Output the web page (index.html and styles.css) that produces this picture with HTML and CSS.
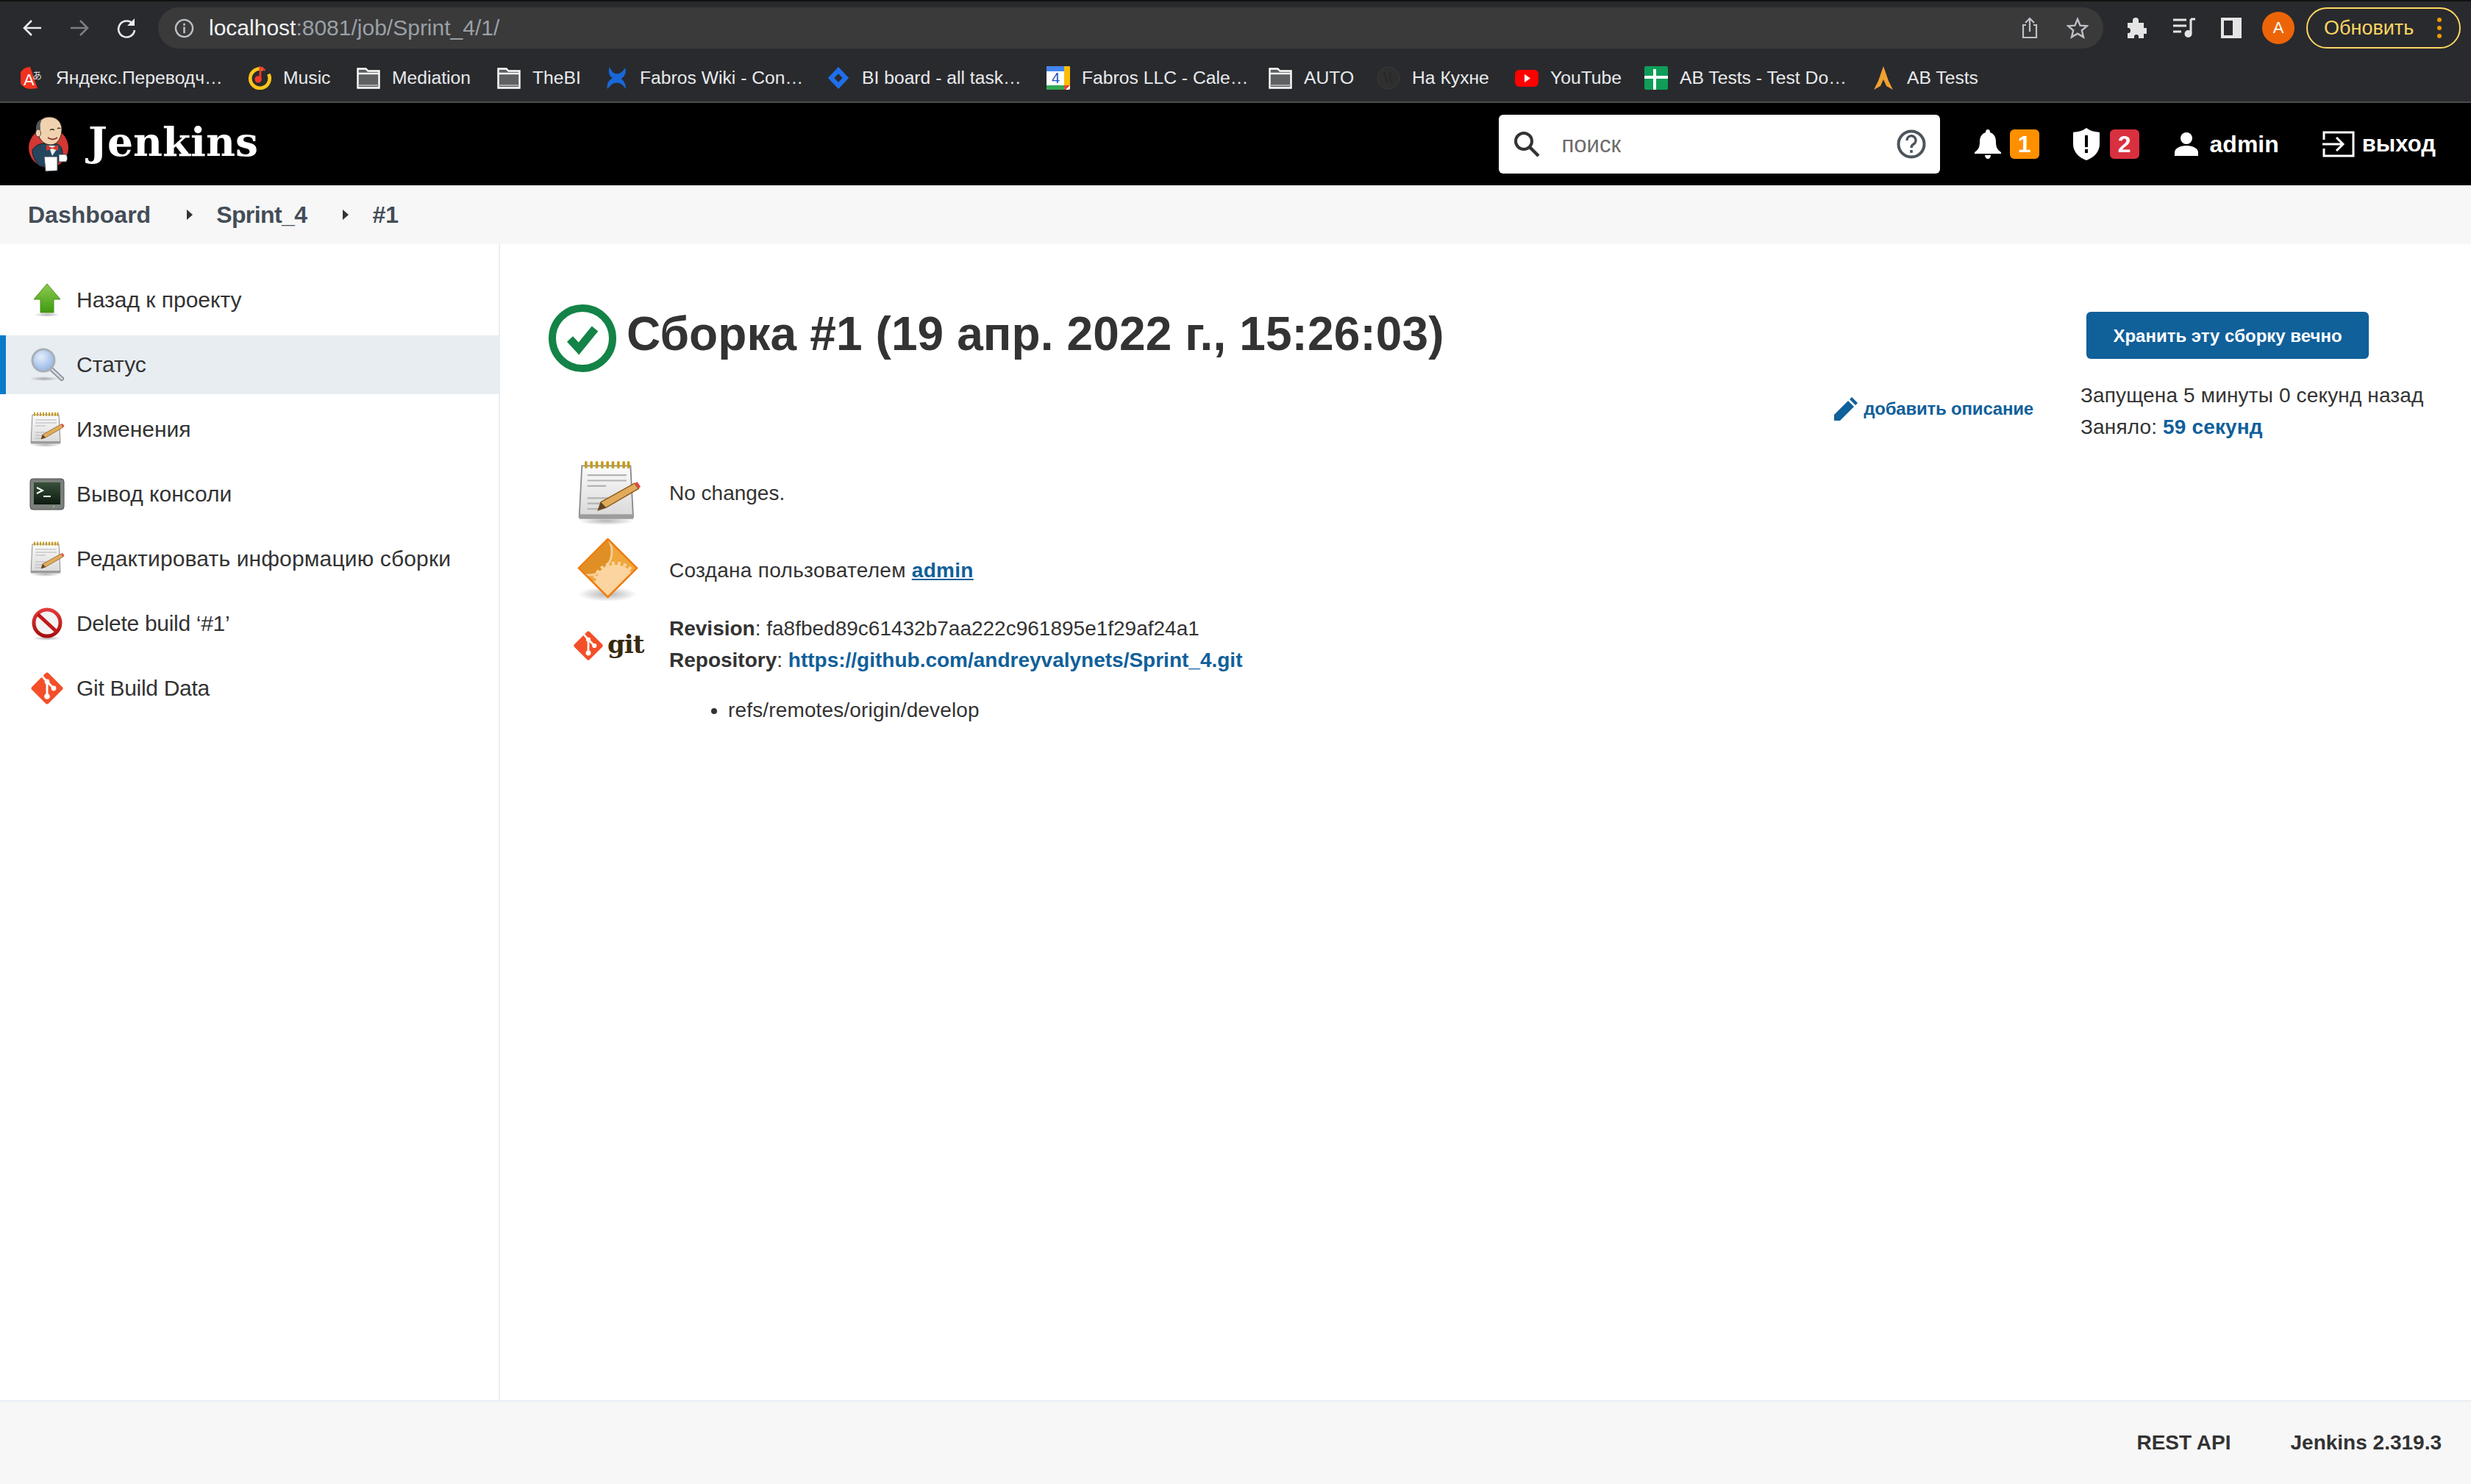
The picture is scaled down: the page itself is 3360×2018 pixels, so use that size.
FILE: index.html
```html
<!DOCTYPE html>
<html lang="ru">
<head>
    <meta charset="UTF-8">
    <title>Sprint_4 #1 [Jenkins]</title>
    <link rel="stylesheet" href="styles.css">
</head>
<body>
    <svg class="defs" width="0" height="0">
        <defs>
            <linearGradient id="paper" x1="0" y1="0" x2="0" y2="1"><stop offset="0" stop-color="#fbfbfb"/><stop offset="1" stop-color="#d8d8d8"/></linearGradient>
            <linearGradient id="green" x1="0" y1="0" x2="0" y2="1"><stop offset="0" stop-color="#8ecb50"/><stop offset="1" stop-color="#3f9a10"/></linearGradient>
            <radialGradient id="lens" cx="0.4" cy="0.35" r="0.7"><stop offset="0" stop-color="#e4eefb"/><stop offset="1" stop-color="#8fb2e4"/></radialGradient>
            <linearGradient id="screen" x1="0" y1="0" x2="0" y2="1"><stop offset="0" stop-color="#38503a"/><stop offset="1" stop-color="#0e1a10"/></linearGradient>
            <linearGradient id="ring" x1="0" y1="0" x2="0" y2="1"><stop offset="0" stop-color="#e23b3b"/><stop offset="1" stop-color="#a80f0f"/></linearGradient>
            <radialGradient id="shade"><stop offset="0" stop-color="#000" stop-opacity=".3"/><stop offset="1" stop-color="#000" stop-opacity="0"/></radialGradient>
            <clipPath id="gem"><path d="M42.500 0L83 40.500 42.500 81 2 40.500z"/></clipPath>
            <symbol id="folder" viewBox="0 0 32 32">
                <path d="M1.500 3.500h11l3 3h15v23h-29z" fill="#5f6063" stroke="#fff" stroke-width="2.400"/>
                <path d="M2 10h28" stroke="#fff" stroke-width="2.400"/>
                <path d="M2 26h28" stroke="#aaa" stroke-width="2"/>
            </symbol>
            <symbol id="notepad" viewBox="0 0 48 48">
                <ellipse cx="22" cy="45" rx="21" ry="3" fill="url(#shade)"/>
                <path d="M4 4h36l2 38H2z" fill="url(#paper)" stroke="#8a8a8a"/>
                <rect x="2" y="40" width="40" height="3.500" fill="#9c9c9c"/>
                <g stroke="#b3b3b3" stroke-width="1.200">
                    <path d="M8 11h29M8 15h29M8 19h14M8 28h17M8 32h12M8 36h10"/>
                </g>
                <g stroke="#c79c1a" stroke-width="2" stroke-linecap="round">
                    <path d="M7 1.500v3.500M11 1.500v3.500M15 1.500v3.500M19 1.500v3.500M23 1.500v3.500M27 1.500v3.500M31 1.500v3.500M35 1.500v3.500M38.500 1.500v3.500"/>
                </g>
                <path d="M16 37l2-6 25-14 3 4-24 14z" fill="#e0ac5c" stroke="#8f5f20" stroke-width=".8"/>
                <path d="M16 37l2-6 4 4z" fill="#5d4428"/>
                <path d="M43 17l2-1 2.500 3.500-1.500 1.500z" fill="#e0474c"/>
            </symbol>
            <symbol id="gitlogo" viewBox="0 0 48 48">
                <rect x="8" y="8" width="32" height="32" rx="3" transform="rotate(45 24 24)" fill="#f34f29"/>
                <g stroke="#fff" stroke-width="3" fill="none">
                    <path d="M17 7l7 8v20M24 15l9 9"/>
                </g>
                <circle cx="24" cy="15" r="3.400" fill="#fff"/>
                <circle cx="24" cy="35" r="3.800" fill="#fff"/>
                <circle cx="33" cy="24" r="3.400" fill="#fff"/>
            </symbol>
        </defs>
    </svg>

    <div class="page">
        <div class="browser">
            <div class="toolbar">
                <svg class="tb-icon" viewBox="0 0 28 28"><path d="M26 14H4M13 4L3 14l10 10" fill="none" stroke="#e8eaed" stroke-width="2.600"/></svg>
                <svg class="tb-icon fwd" viewBox="0 0 28 28"><path d="M2 14h22M15 4l10 10-10 10" fill="none" stroke="#7c7e81" stroke-width="2.600"/></svg>
                <svg class="tb-icon reload" viewBox="0 0 28 28"><path d="M23 9a11 11 0 1 0 2 8" fill="none" stroke="#e8eaed" stroke-width="2.600"/><path d="M25 1v10H15z" fill="#e8eaed"/></svg>
                <div class="urlbar">
                    <svg class="info" viewBox="0 0 28 28"><circle cx="14" cy="14" r="12" fill="none" stroke="#bdc1c6" stroke-width="2.400"/><path d="M14 12v9M14 7v3" stroke="#bdc1c6" stroke-width="2.600"/></svg>
                    <span class="url"><span class="host">localhost</span>:8081/job/Sprint_4/1/</span>
                    <svg class="share" viewBox="0 0 22 30"><path d="M6 11H2v17h18V11h-4M11 20V2M5 8l6-6 6 6" fill="none" stroke="#bdc1c6" stroke-width="2.200"/></svg>
                    <svg class="star" viewBox="0 0 30 30"><path d="M15 3l3.600 8.600 9.300.7-7.100 6 2.200 9.100L15 22.600 7 27.400l2.200-9.100-7.100-6 9.300-.7z" fill="none" stroke="#bdc1c6" stroke-width="2.400"/></svg>
                </div>
                <svg class="puzzle" viewBox="0 0 28 30"><path d="M2 8h7V5a4 4 0 0 1 8 0v3h7v7h2a4 4 0 0 1 0 8h-2v6h-7v-2a3 3 0 0 0-6 0v2H2v-7h2a4 4 0 0 0 0-7H2z" fill="#e4e4e4"/></svg>
                <svg class="queue" viewBox="0 0 32 28"><path d="M1 3h18M1 11h18M1 19h11" stroke="#e4e4e4" stroke-width="3"/><path d="M25 2v20" stroke="#e4e4e4" stroke-width="3"/><path d="M25 2h6" stroke="#e4e4e4" stroke-width="3"/><circle cx="21.500" cy="22" r="5" fill="#e4e4e4"/></svg>
                <svg class="panel" viewBox="0 0 28 28"><rect x="2" y="2" width="24" height="24" fill="none" stroke="#e4e4e4" stroke-width="4"/><rect x="16" y="2" width="10" height="24" fill="#e4e4e4"/></svg>
                <div class="avatar">A</div>
                <div class="update">
                    <span>Обновить</span>
                    <span class="dots"><i></i><i></i><i></i></span>
                </div>
            </div>
            <div class="bookmarks">
                <a class="bm">
                    <svg viewBox="0 0 30 32"><path d="M12 1a15 15 0 0 0 0 30l10-1z" fill="#f0321e"/><text x="3" y="26" class="bm-glyph">A</text><text x="15" y="17" class="bm-glyph-sm">あ</text></svg>
                    <span class="w-228">Яндекс.Переводч…</span>
                </a>
                <a class="bm">
                    <svg viewBox="0 0 34 32"><path d="M22 3.500a14 14 0 1 0 8 7" fill="none" stroke="#fcc419" stroke-width="5"/><circle cx="15" cy="18" r="5" fill="#ef3a2c"/><path d="M18 18V1l7 4" fill="none" stroke="#ef3a2c" stroke-width="3"/></svg>
                    <span class="w-67">Music</span>
                </a>
                <a class="bm"><svg class="fold"><use href="#folder"/></svg><span class="w-110">Mediation</span></a>
                <a class="bm"><svg class="fold"><use href="#folder"/></svg><span class="w-65">TheBI</span></a>
                <a class="bm">
                    <svg viewBox="0 0 34 32"><path d="M7 0c3 6 6 10 11 10 5 0 9-4 12-9 2 8-1 13-6 16 4 3 7 8 7 15-5-6-8-9-13-9-6 0-8 3-14 9-1-8 2-13 8-16C7 14 5 8 7 0z" fill="#1868db"/></svg>
                    <span class="w-221">Fabros Wiki - Con…</span>
                </a>
                <a class="bm">
                    <svg viewBox="0 0 34 32"><path d="M17 0l15 16-15 16L2 16z" fill="#1f6feb"/><path d="M17 10l6 6-6 6-6-6z" fill="#292a2d"/></svg>
                    <span class="w-218">BI board - all task…</span>
                </a>
                <a class="bm">
                    <svg viewBox="0 0 32 32"><rect x="0" y="0" width="32" height="32" rx="2" fill="#fff"/><path d="M0 2a2 2 0 0 1 2-2h22v7H0z" fill="#4285f4"/><path d="M24 0h6a2 2 0 0 1 2 2v24h-8z" fill="#fbbc04"/><path d="M0 26h24v6H2a2 2 0 0 1-2-2z" fill="#34a853"/><path d="M24 26h8l-6 6h-2z" fill="#ea4335"/><text x="7" y="23" class="cal-num">4</text></svg>
                    <span class="w-221">Fabros LLC - Cale…</span>
                </a>
                <a class="bm"><svg class="fold"><use href="#folder"/></svg><span class="w-66">AUTO</span></a>
                <a class="bm">
                    <svg viewBox="0 0 32 32"><circle cx="16" cy="16" r="15" fill="#2f2f2f" stroke="#3a3a3a"/><path d="M10 8l4 14M20 7c-4 6-2 14 2 17" stroke="#1f1f1f" fill="none"/></svg>
                    <span class="w-107">На Кухне</span>
                </a>
                <a class="bm">
                    <svg viewBox="0 0 32 32"><rect x="0" y="5" width="32" height="23" rx="6" fill="#f00"/><path d="M13 11l8 5.500-8 5.500z" fill="#fff"/></svg>
                    <span class="w-95">YouTube</span>
                </a>
                <a class="bm">
                    <svg viewBox="0 0 32 32"><rect x="0" y="0" width="32" height="32" rx="2" fill="#0f9d58"/><path d="M0 15h32M14 4v28" stroke="#fff" stroke-width="4"/></svg>
                    <span class="w-228">AB Tests - Test Do…</span>
                </a>
                <a class="bm">
                    <svg viewBox="0 0 30 32"><path d="M15 0l7 20 6 12-9-5-4-9-4 9-9 5 6-12z" fill="#f0a030"/></svg>
                    <span class="w-98">AB Tests</span>
                </a>
            </div>
        </div>

        <header class="topbar">
            <a class="brand">
                <svg class="butler" viewBox="0 0 56 76">
                    <circle cx="28" cy="43" r="27" fill="#d33833"/>
                    <path d="M6 46c4-6 10-9 16-9l18 1c5 2 7 7 7 14l-5 3-2 13H16C10 62 6 54 6 46z" fill="#25475e" stroke="#12202b"/>
                    <path d="M28 40l7 0 6 2-8 12z" fill="#e9eef0"/>
                    <path d="M13 18c0-11 7-17 16-17 10 0 17 7 17 17 0 11-6 21-15 21-10 0-18-9-18-21z" fill="#f0d2b0" stroke="#3a2a20"/>
                    <path d="M12 24c-3-9 0-18 7-20-2 5-3 8-2 12l-1 7z" fill="#54585b"/>
                    <ellipse cx="14" cy="23" rx="3.500" ry="5" fill="#f0d2b0" stroke="#3a2a20" stroke-width=".8"/>
                    <path d="M30 19c1.500-1.500 4-1.500 6 0M40 17c1-1 3-1 4 0" fill="none" stroke="#3a2a20" stroke-width="1.500"/>
                    <path d="M27 29c4 3 9 3 13 0" stroke="#8e3d33" stroke-width="2" fill="none"/>
                    <path d="M25 39l8 4 8-4 0 8-8-3-8 3z" fill="#d33833"/>
                    <path d="M22 55h18v19l-16 1z" fill="#fff" stroke="#3a4a55"/>
                    <path d="M42 52h10c2 3 2 7 0 10H42z" fill="#fff" stroke="#3a4a55"/>
                </svg>
                <span class="brand-name">Jenkins</span>
            </a>
            <div class="search">
                <svg class="search-icon" viewBox="0 0 36 36"><circle cx="14" cy="14" r="11" fill="none" stroke="#333" stroke-width="4"/><path d="M22 22l12 12" stroke="#333" stroke-width="4.500"/></svg>
                <span class="search-text">поиск</span>
                <svg class="help" viewBox="0 0 40 40"><circle cx="20" cy="20" r="17.500" fill="none" stroke="#4d545d" stroke-width="4"/><path d="M14 15a6 6 0 1 1 9 5c-2 1.200-3 2.500-3 5" fill="none" stroke="#4d545d" stroke-width="3.400"/><rect x="18.200" y="28" width="3.600" height="3.800" fill="#4d545d"/></svg>
            </div>
            <div class="alert">
                <svg class="bell" viewBox="0 0 36 40"><path d="M18 0c2 0 3 1.500 3 4 6 2 8 7 8 13 0 7 2 11 7 14v2H0v-2c5-3 7-7 7-14 0-6 2-11 8-13 0-2.500 1-4 3-4z" fill="#fff"/><path d="M14 35h8c0 3-2 5-4 5s-4-2-4-5z" fill="#fff"/></svg>
                <span class="badge orange">1</span>
            </div>
            <div class="alert second">
                <svg class="shield" viewBox="0 0 36 44"><path d="M18 0c5 4 11 5 18 6v16c0 10-7 18-18 22C7 40 0 32 0 22V6c7-1 13-2 18-6z" fill="#fff"/><path d="M16 10h4v16h-4zM16 29h4v5h-4z" fill="#000"/></svg>
                <span class="badge red">2</span>
            </div>
            <a class="user">
                <svg class="person" viewBox="0 0 32 32"><circle cx="16" cy="8" r="8" fill="#fff"/><path d="M0 32v-5c0-5 7-9 16-9s16 4 16 9v5z" fill="#fff"/></svg>
                <span>admin</span>
            </a>
            <a class="logout">
                <svg class="door" viewBox="0 0 44 36"><path d="M2 12V2h40v32H2V24" fill="none" stroke="#fff" stroke-width="3"/><path d="M0 18h26M19 9l9 9-9 9" fill="none" stroke="#fff" stroke-width="3"/></svg>
                <span>выход</span>
            </a>
        </header>

        <nav class="crumbs">
            <a>Dashboard</a>
            <span class="caret"></span>
            <a class="crumb-job">Sprint_4</a>
            <span class="caret"></span>
            <a>#1</a>
        </nav>

        <div class="layout">
            <aside class="sidebar">
                <a class="task">
                    <svg class="task-icon" viewBox="0 0 48 48"><ellipse cx="24" cy="44" rx="18" ry="3" fill="url(#shade)"/><path d="M24 2l18 21H33v18H15V23H6z" fill="url(#green)" stroke="#4e8f1d"/></svg>
                    <span>Назад к проекту</span>
                </a>
                <a class="task active">
                    <svg class="task-icon" viewBox="0 0 48 48"><ellipse cx="20" cy="43" rx="20" ry="3" fill="url(#shade)"/><path d="M29 29l15 14" stroke="#808a94" stroke-width="6" stroke-linecap="round"/><path d="M29 29l15 14" stroke="#d6dade" stroke-width="3" stroke-linecap="round"/><circle cx="19" cy="18" r="15" fill="url(#lens)" stroke="#a9b0b8" stroke-width="3"/></svg>
                    <span>Статус</span>
                </a>
                <a class="task"><svg class="task-icon"><use href="#notepad"/></svg><span>Изменения</span></a>
                <a class="task">
                    <svg class="task-icon" viewBox="0 0 48 48"><rect x="1" y="3" width="46" height="42" rx="4" fill="#7b807c" stroke="#4c4f4c"/><rect x="6" y="8" width="36" height="30" fill="url(#screen)"/><path d="M10 15l8 4-8 4" fill="none" stroke="#fff" stroke-width="2"/><path d="M19 27h10" stroke="#fff" stroke-width="2"/><circle cx="33" cy="41" r="1" fill="#9bd64a"/></svg>
                    <span>Вывод консоли</span>
                </a>
                <a class="task"><svg class="task-icon"><use href="#notepad"/></svg><span class="task-long">Редактировать информацию сборки</span></a>
                <a class="task">
                    <svg class="task-icon" viewBox="0 0 48 48"><ellipse cx="24" cy="44" rx="20" ry="3" fill="url(#shade)"/><circle cx="24" cy="23" r="18" fill="#f4f4f4" stroke="url(#ring)" stroke-width="5"/><path d="M11 11l26 24" stroke="#c11a1a" stroke-width="5"/></svg>
                    <span class="task-latin">Delete build ‘#1’</span>
                </a>
                <a class="task"><svg class="task-icon"><use href="#gitlogo"/></svg><span class="task-latin">Git Build Data</span></a>
            </aside>

            <main class="main">
                <div class="content">
                    <h1 class="title">
                        <svg class="status" viewBox="0 0 92 92"><circle cx="46" cy="46" r="41" fill="none" stroke="#138347" stroke-width="10"/><path d="M29 47l12 13 22-27" fill="none" stroke="#138347" stroke-width="11"/></svg>
                        <span class="title-text">Сборка #1 (19 апр. 2022 г., 15:26:03)</span>
                    </h1>
                    <div class="describe">
                        <a class="describe-link">
                            <svg class="pencil" viewBox="0 0 32 32"><path d="M0 32v-8L19 5l8 8L8 32zM21 3l3-3 8 8-3 3z" fill="#10609a"/></svg>
                            <span>добавить описание</span>
                        </a>
                    </div>
                    <div class="build-row first">
                        <div class="row-icon"><svg class="big-icon"><use href="#notepad"/></svg></div>
                        <p>No changes.</p>
                    </div>
                    <div class="build-row">
                        <div class="row-icon">
                            <svg class="big-icon" viewBox="0 0 88 88">
                                <ellipse cx="42" cy="76" rx="40" ry="10" fill="url(#shade)"/>
                                <g clip-path="url(#gem)">
                                    <rect width="88" height="88" fill="#f0a63a"/>
                                    <circle cx="16" cy="18" r="32" fill="#e08f24" stroke="#f5cd96" stroke-width="3"/>
                                    <circle cx="53" cy="64" r="30" fill="none" stroke="#fbd4a0" stroke-width="5" stroke-dasharray="4 4"/>
                                    <circle cx="53" cy="64" r="28" fill="#fbd4a0"/>
                                </g>
                                <path d="M42.500 1L82 40.500 42.500 80 3 40.500z" fill="none" stroke="#ee7d12" stroke-width="2.500"/>
                            </svg>
                        </div>
                        <p class="wide">Создана пользователем <a class="link underline">admin</a></p>
                    </div>
                    <div class="build-row git-row">
                        <div class="row-icon git-mark">
                            <svg class="git-icon"><use href="#gitlogo"/></svg>
                            <span class="git-word">git</span>
                        </div>
                        <div class="git-info">
                            <p><b>Revision</b>: fa8fbed89c61432b7aa222c961895e1f29af24a1</p>
                            <p><b>Repository</b>: <a class="link strong">https://github.com/andreyvalynets/Sprint_4.git</a></p>
                        </div>
                    </div>
                    <ul class="refs">
                        <li>refs/remotes/origin/develop</li>
                    </ul>
                </div>
                <div class="side">
                    <button class="keep">Хранить эту сборку вечно</button>
                    <div class="times">
                        <p>Запущена 5 минуты 0 секунд назад</p>
                        <p>Заняло: <a class="link strong">59 секунд</a></p>
                    </div>
                </div>
            </main>
        </div>

        <footer class="footer">
            <a>REST API</a>
            <a>Jenkins 2.319.3</a>
        </footer>
    </div>
</body>
</html>
```

FILE: styles.css
```css
* {
    box-sizing: border-box;
    margin: 0;
    padding: 0;
}

html, body {
    height: 2018px;
    overflow: hidden;
}

body {
    font-family: 'Liberation Sans', Arial, sans-serif;
    font-size: 28px;
    color: #333;
    background: #fff;
}

.defs {
    position: absolute;
}

.page {
    height: 2018px;
    display: flex;
    flex-direction: column;
}

/* browser chrome */
.browser {
    height: 140px;
    background: #292a2d;
    border-top: 2px solid #111;
    border-bottom: 2px solid #4a4b4d;
    flex: none;
}

.toolbar {
    height: 72px;
    padding: 8px 15px 8px 30px;
    display: flex;
    align-items: center;
}

.tb-icon {
    width: 28px;
    height: 28px;
    flex: none;
}

.fwd {
    margin-left: 36px;
}

.reload {
    margin-left: 36px;
}

.urlbar {
    width: 2645px;
    height: 56px;
    margin-left: 29px;
    border-radius: 28px;
    background: #3a3a3b;
    display: flex;
    align-items: center;
    padding-left: 22px;
    flex: none;
}

.info {
    width: 27px;
    height: 27px;
    flex: none;
}

.url {
    margin-left: 20px;
    font-size: 30px;
    color: #9aa0a6;
    flex: 1;
}

.host {
    color: #f1f3f4;
}

.share {
    width: 22px;
    height: 30px;
}

.star {
    width: 30px;
    height: 30px;
    margin-left: 39px;
    margin-right: 20px;
}

.puzzle {
    width: 28px;
    height: 30px;
    margin-left: 31px;
    flex: none;
}

.queue {
    width: 32px;
    height: 28px;
    margin-left: 35px;
    flex: none;
}

.panel {
    width: 28px;
    height: 28px;
    margin-left: 34px;
    flex: none;
}

.avatar {
    width: 44px;
    height: 44px;
    margin-left: 28px;
    border-radius: 50%;
    background: #ec6408;
    color: #fff;
    font-size: 22px;
    display: flex;
    justify-content: center;
    align-items: center;
    flex: none;
}

.update {
    width: 210px;
    height: 56px;
    margin-left: 16px;
    padding: 0 24px 0 22px;
    border: 2px solid #fdd663;
    border-radius: 28px;
    display: flex;
    justify-content: space-between;
    align-items: center;
    color: #fdd663;
    font-size: 27px;
    flex: none;
}

.dots {
    display: flex;
    flex-direction: column;
    gap: 5px;
}

.dots i {
    display: block;
    width: 6px;
    height: 6px;
    border-radius: 50%;
    background: #f29900;
}

.bookmarks {
    height: 64px;
    padding-left: 28px;
    display: flex;
    align-items: center;
    gap: 33px;
    color: #e8eaed;
    font-size: 24.7px;
}

.bm {
    display: flex;
    align-items: center;
    gap: 16px;
    white-space: nowrap;
}

.bm svg {
    width: 32px;
    height: 32px;
    flex: none;
}

.bm-glyph {
    font-size: 22px;
    fill: #fff;
}

.bm-glyph-sm {
    font-family: 'Noto Sans CJK JP', sans-serif;
    font-size: 13px;
    fill: #ddd;
}

.cal-num {
    font-size: 20px;
    fill: #1a56c8;
}

.w-228 { width: 228px; }
.w-221 { width: 221px; }
.w-218 { width: 218px; }
.w-110 { width: 110px; }
.w-107 { width: 107px; }
.w-98 { width: 98px; }
.w-95 { width: 95px; }
.w-67 { width: 67px; }
.w-66 { width: 66px; }
.w-65 { width: 65px; }

/* jenkins header */
.topbar {
    height: 112px;
    background: #000;
    color: #fff;
    display: flex;
    align-items: center;
    padding: 0 48px 0 38px;
    flex: none;
}

.brand {
    display: flex;
    align-items: center;
    gap: 26px;
    margin-right: auto;
}

.butler {
    width: 56px;
    height: 76px;
}

.brand-name {
    padding-bottom: 8px;
    font-family: 'DejaVu Serif', 'Liberation Serif', serif;
    font-weight: 700;
    font-size: 55px;
}

.search {
    width: 600px;
    height: 80px;
    border-radius: 6px;
    background: #fff;
    display: flex;
    align-items: center;
    padding: 0 19px 0 20px;
}

.search-icon {
    width: 36px;
    height: 36px;
}

.search-text {
    margin-left: 30px;
    padding-top: 2px;
    color: #6d6b6b;
    font-size: 31px;
    flex: 1;
}

.help {
    width: 40px;
    height: 40px;
}

.alert {
    margin-left: 47px;
    display: flex;
    align-items: center;
    gap: 12px;
}

.alert.second {
    margin-left: 46px;
    gap: 14px;
}

.bell {
    width: 36px;
    height: 40px;
}

.shield {
    width: 36px;
    height: 44px;
}

.badge {
    width: 40px;
    height: 40px;
    border-radius: 6px;
    display: flex;
    justify-content: center;
    align-items: center;
    font-weight: 700;
    font-size: 32px;
}

.orange {
    background: #fe9000;
}

.red {
    background: #d8303e;
}

.user {
    margin-left: 48px;
    display: flex;
    align-items: center;
    gap: 16px;
    font-size: 32px;
    font-weight: 700;
}

.person {
    width: 32px;
    height: 32px;
}

.logout {
    margin-left: 59px;
    display: flex;
    align-items: center;
    gap: 10px;
    font-size: 31px;
    font-weight: 700;
}

.door {
    width: 44px;
    height: 36px;
}

/* breadcrumbs */
.crumbs {
    height: 80px;
    background: #f7f7f7;
    padding-left: 38px;
    display: flex;
    align-items: center;
    color: #434d57;
    font-size: 32px;
    font-weight: 700;
    flex: none;
}

.crumb-job {
    letter-spacing: -.6px;
}

.caret {
    width: 0;
    height: 0;
    margin: 0 32px 0 49px;
    border-left: 8px solid #333;
    border-top: 7px solid transparent;
    border-bottom: 7px solid transparent;
}

/* sidebar */
.layout {
    flex: 1;
    display: flex;
    min-height: 0;
}

.sidebar {
    width: 680px;
    padding-top: 36px;
    border-right: 2px solid #e9eef3;
    flex: none;
}

.task {
    height: 80px;
    margin-bottom: 8px;
    padding-left: 40px;
    display: flex;
    align-items: center;
    gap: 16px;
    font-size: 30px;
    color: #333;
}

.task.active {
    margin-right: -2px;
    padding-left: 32px;
    background: #e8edf2;
    border-left: 8px solid #0b7bc9;
}

.task-icon {
    width: 48px;
    height: 48px;
    flex: none;
}

.task-long {
    letter-spacing: .15px;
}

.task-latin {
    letter-spacing: -.3px;
}

/* build page */
.main {
    flex: 1;
    display: flex;
    padding: 82px 0 0 66px;
}

.content {
    flex: 1;
}

.title {
    height: 92px;
    display: flex;
    align-items: center;
    gap: 14px;
    font-size: 64px;
    font-weight: 700;
}

.title-text {
    padding-bottom: 12px;
    letter-spacing: .1px;
}

.status {
    width: 92px;
    height: 92px;
    flex: none;
}

.describe {
    margin-top: 34px;
    padding-right: 64px;
    display: flex;
    justify-content: flex-end;
}

.describe-link {
    display: flex;
    align-items: center;
    gap: 8px;
    color: #10609a;
    font-size: 24px;
    font-weight: 700;
    letter-spacing: -.2px;
}

.pencil {
    width: 32px;
    height: 32px;
}

.build-row {
    margin-top: 18px;
    padding-left: 38px;
    display: flex;
    align-items: center;
    min-height: 88px;
}

.build-row.first {
    margin-top: 54px;
}

.first p {
    padding-top: 2px;
}

.wide {
    letter-spacing: .3px;
}

.row-icon {
    width: 126px;
    flex: none;
}

.big-icon {
    display: block;
    width: 88px;
    height: 88px;
}

.link {
    color: #10609a;
}

.underline {
    font-weight: 700;
    text-decoration: underline;
}

.strong {
    font-weight: 700;
}

.git-row {
    margin-top: 12px;
    padding-left: 32px;
}

.git-mark {
    width: 132px;
    padding-top: 4px;
    display: flex;
    align-items: center;
    gap: 4px;
}

.git-icon {
    width: 44px;
    height: 44px;
    flex: none;
}

.git-word {
    padding-bottom: 4px;
    font-family: 'DejaVu Serif', 'Liberation Serif', serif;
    font-weight: 700;
    font-size: 34px;
    letter-spacing: -1px;
    color: #362a0e;
    line-height: 1;
}

.git-info {
    line-height: 43px;
}

.refs {
    margin-top: 30px;
    padding-left: 80px;
    margin-left: 164px;
    letter-spacing: .15px;
}

/* right column */
.side {
    width: 531px;
    flex: none;
}

.keep {
    display: block;
    width: 384px;
    height: 64px;
    margin: 10px 0 0 8px;
    padding-top: 2px;
    border: none;
    border-radius: 6px;
    background: #10609a;
    color: #fff;
    font-family: inherit;
    font-size: 24px;
    font-weight: 700;
}

.times {
    margin-top: 28px;
    line-height: 43px;
    letter-spacing: .15px;
}

/* footer */
.footer {
    height: 114px;
    background: #f7f7f7;
    border-top: 2px solid #e9eef3;
    display: flex;
    justify-content: flex-end;
    align-items: center;
    gap: 81px;
    padding-right: 40px;
    font-weight: 700;
    font-size: 28px;
    flex: none;
}
```
